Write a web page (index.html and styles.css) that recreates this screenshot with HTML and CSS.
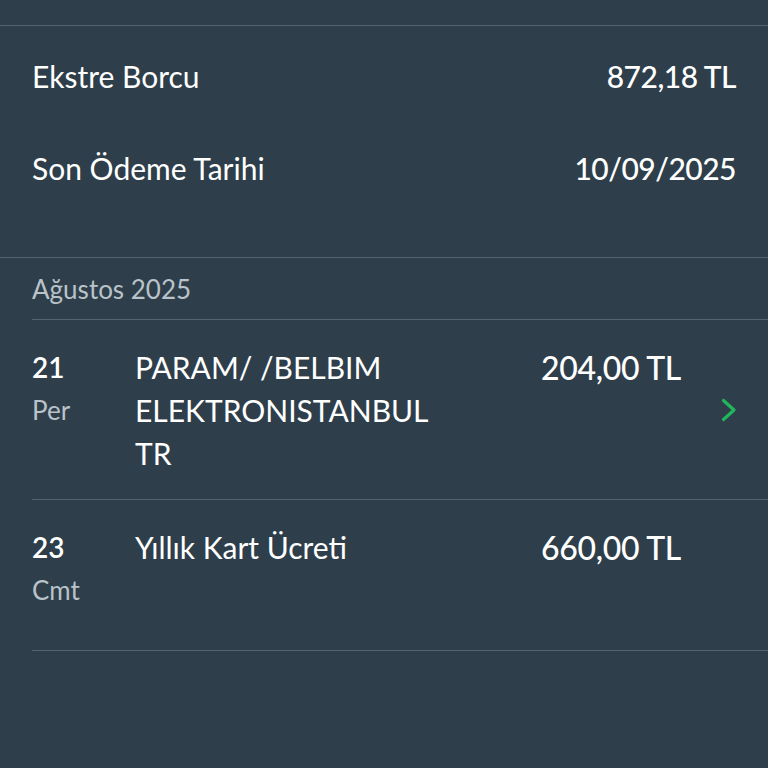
FILE: index.html
```html
<!DOCTYPE html>
<html lang="tr">
<head>
  <meta charset="UTF-8" />
  <meta name="viewport" content="width=device-width, initial-scale=1.0"/>
  <title>Ekstre</title>
  <link rel="stylesheet" href="styles.css">
</head>
<body>

  <!-- Summary -->
  <section class="summary">
    <div class="summary-row">
      <span class="label">Ekstre Borcu</span>
      <span class="value">872,18 TL</span>
    </div>
    <div class="summary-row">
      <span class="label">Son Ödeme Tarihi</span>
      <span class="value">10/09/2025</span>
    </div>
  </section>

  <!-- Month header -->
  <div class="month">Ağustos 2025</div>

  <!-- Transactions -->
  <ul class="tx-list">
    <li class="tx">
      <div class="tx-date">
        <span class="day">21</span>
        <span class="weekday">Per</span>
      </div>
      <div class="tx-desc">PARAM/ /BELBIM ELEKTRONISTANBUL TR</div>
      <div class="tx-amount">204,00 TL</div>
      <div class="tx-arrow">
        <svg width="16" height="24" viewBox="0 0 16 24">
          <polyline points="2.5,2.5 13,12 2.5,21.5" fill="none" stroke="#22b65c" stroke-width="3.2" stroke-linecap="round" stroke-linejoin="round"/>
        </svg>
      </div>
    </li>
    <li class="tx">
      <div class="tx-date">
        <span class="day">23</span>
        <span class="weekday">Cmt</span>
      </div>
      <div class="tx-desc">Yıllık Kart Ücreti</div>
      <div class="tx-amount">660,00 TL</div>
      <div class="tx-arrow"></div>
    </li>
  </ul>

</body>
</html>
```

FILE: styles.css
```css
* {
  margin: 0;
  padding: 0;
  box-sizing: border-box;
}

body {
  font-family: 'Lato', 'Noto Sans', sans-serif;
  background: #2e3f4b;
  color: #fff;
  width: 768px;
  height: 768px;
  padding-top: 25px;
}

/* Summary */
.summary {
  border-top: 1px solid #55656f;
  border-bottom: 1px solid #55656f;
  padding: 28px 32px 68px;
  display: flex;
  flex-direction: column;
  gap: 49px;
}

.summary-row {
  display: flex;
  justify-content: space-between;
  align-items: center;
  height: 43px;
  font-size: 30px;
}

.summary-row .value {
  font-weight: 500;
  letter-spacing: -0.5px;
}

/* Month header */
.month {
  height: 61px;
  display: flex;
  align-items: center;
  padding-left: 32px;
  font-size: 26px;
  color: #b9c3c9;
}

/* Transactions */
.tx-list {
  list-style: none;
  margin-left: 32px;
  border-top: 1px solid #55656f;
}

.tx {
  display: flex;
  align-items: flex-start;
  border-bottom: 1px solid #55656f;
  padding: 26px 0 24px;
  font-size: 30px;
  line-height: 43px;
}

.tx + .tx {
  padding-bottom: 38px;
}

.tx-date {
  display: flex;
  flex-direction: column;
  width: 103px;
}

.day {
  font-size: 28px;
  font-weight: 600;
}

.weekday {
  color: #b9c3c9;
  font-size: 26px;
}

.tx-desc {
  width: 310px;
}

.tx-amount {
  width: 236px;
  text-align: right;
  font-size: 32px;
  font-weight: 500;
  letter-spacing: -0.3px;
}

.tx-arrow {
  width: 87px;
  display: flex;
  justify-content: flex-end;
  padding-top: 52px;
  padding-right: 31px;
}
```
